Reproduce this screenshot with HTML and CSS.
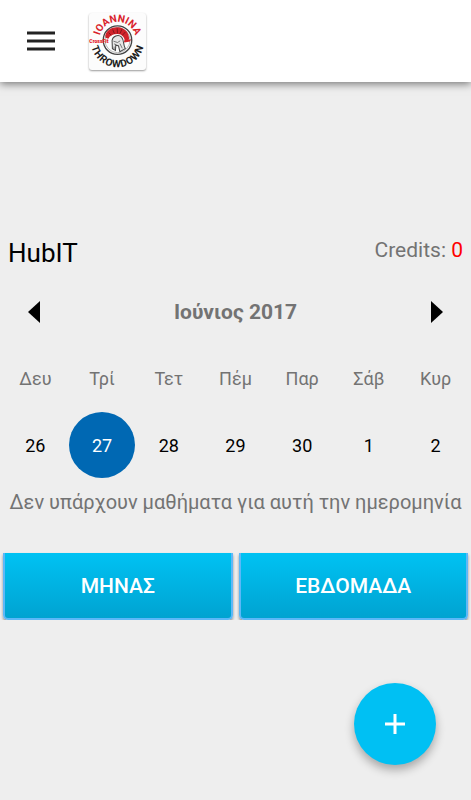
FILE: index.html
```
<!DOCTYPE html>
<html lang="el">
<head>
    <meta charset="UTF-8">
    <meta name="viewport" content="width=device-width, initial-scale=1.0">
    <title>Ioannina Throwdown</title>
    <link rel="stylesheet" href="styles.css">
</head>
<body>
    <header class="toolbar">
        <button class="menu" type="button" aria-label="Μενού">
            <svg width="28" height="20" viewBox="0 0 28 20">
                <path d="M0 2h28M0 10h28M0 18h28" stroke="#222" stroke-width="3"/>
            </svg>
        </button>
        <svg class="logo" viewBox="0 0 168 168" role="img" aria-label="Ioannina Throwdown">
            <defs>
                <path id="top" d="M30 80A54 54 0 0 1 138 80"/>
                <path id="bottom" d="M5 81A79 79 0 0 0 163 81"/>
            </defs>
            <text class="logo-top"><textPath href="#top" startOffset="50%">IOANNINA</textPath></text>
            <text class="logo-bottom" dx="0 2 2 2 2 2 2 2 2"><textPath href="#bottom" startOffset="50%">THROWDOWN</textPath></text>
            <circle cx="84" cy="80" r="42" fill="none" stroke="#444" stroke-width="4"/>
            <circle cx="84" cy="80" r="37" fill="none" stroke="#999" stroke-width="2"/>
            <!-- crest -->
            <path d="M48 66C52 48 72 38 92 43C109 48 119 60 118 78L106 84C105 72 97 62 84 62C70 62 61 67 57 76L49 73Z" fill="#d0222a"/>
            <path d="M58 58l8 8M70 49l5 12M83 45l1 15M97 48l-6 13M107 56l-9 10" stroke="#5c1114" stroke-width="2"/>
            <!-- helmet -->
            <path d="M68 81C70 68 86 62 96 71C104 80 100 94 107 105L91 114L87 97L79 94L78 110L69 105Z" fill="#e6e6e6" stroke="#444" stroke-width="3"/>
            <path d="M72 83l12 4 8-5M74 91l5 2M91 90l7 14M74 99v8" stroke="#444" stroke-width="2" fill="none"/>
            <path d="M103 81l21-4-3 7-17 3z" fill="#d0222a"/>
            <text class="logo-brand" x="1" y="88">CrossFit</text>
        </svg>
    </header>
    <main>
        <div class="account">
            <h1>HubIT</h1>
            <p>Credits: <span class="credits">0</span></p>
        </div>
        <div class="month">
            <button type="button" aria-label="Προηγούμενος">
                <svg width="12" height="22" viewBox="0 0 12 22"><path d="M12 0v22L0 11z"/></svg>
            </button>
            <h2>Ιούνιος 2017</h2>
            <button type="button" aria-label="Επόμενος">
                <svg width="12" height="22" viewBox="0 0 12 22"><path d="M0 0v22l12-11z"/></svg>
            </button>
        </div>
        <table class="week">
            <thead>
                <tr>
                    <th>Δευ</th>
                    <th>Τρί</th>
                    <th>Τετ</th>
                    <th>Πέμ</th>
                    <th>Παρ</th>
                    <th>Σάβ</th>
                    <th>Κυρ</th>
                </tr>
            </thead>
            <tbody>
                <tr>
                    <td><button type="button">26</button></td>
                    <td><button type="button" class="selected">27</button></td>
                    <td><button type="button">28</button></td>
                    <td><button type="button">29</button></td>
                    <td><button type="button">30</button></td>
                    <td><button type="button">1</button></td>
                    <td><button type="button">2</button></td>
                </tr>
            </tbody>
        </table>
        <p class="message">Δεν υπάρχουν μαθήματα για αυτή την ημερομηνία</p>
        <div class="views">
            <button type="button">ΜΗΝΑΣ</button>
            <button type="button">ΕΒΔΟΜΑΔΑ</button>
        </div>
    </main>
    <button class="add" type="button" aria-label="Προσθήκη">
        <svg width="20" height="20" viewBox="0 0 20 20">
            <path d="M10 0v20M0 10h20" stroke="#fff" stroke-width="3"/>
        </svg>
    </button>
</body>
</html>
```
FILE: styles.css
```
* {
    box-sizing: border-box;
}
body {
    margin: 0;
    background-color: #eee;
    color: #737373;
    font-family: Roboto, "Noto Sans", sans-serif;
}
h1, h2, p {
    margin: 0;
}
button {
    border: 0;
    padding: 0;
    background: none;
    font-family: inherit;
    cursor: pointer;
}
svg {
    display: block;
}
.toolbar {
    display: flex;
    align-items: center;
    gap: 28px;
    height: 82px;
    padding: 0 21px;
    background-color: #fff;
    box-shadow: 0 2px 8px rgba(0, 0, 0, 0.5);
}
.menu {
    padding: 6px;
}
.logo {
    width: 57px;
    height: 57px;
    border-radius: 3px;
    background-color: #fcfcfc;
    box-shadow: 0 1px 2px rgba(0, 0, 0, 0.4);
}
.logo-top, .logo-bottom {
    font-size: 30px;
    font-weight: bold;
    text-anchor: middle;
}
.logo-top {
    fill: #d9222a;
}
.logo-bottom {
    fill: #1c1c1c;
}
.logo-brand {
    font-size: 15px;
    font-weight: 900;
    fill: #e3141c;
}
main {
    padding-top: 152px;
}
.account {
    display: flex;
    justify-content: space-between;
    padding: 0 8px;
}
.account h1 {
    padding-top: 3px;
    color: #000;
    font-size: 26px;
    font-weight: normal;
    line-height: 32px;
}
.account p {
    font-size: 21px;
    line-height: 32px;
}
.credits {
    color: #f00;
}
.month {
    display: flex;
    align-items: center;
    justify-content: space-between;
    height: 60px;
    margin-top: 13px;
    padding: 0 20px;
}
.month button {
    padding: 8px;
}
.month h2 {
    font-size: 21px;
    line-height: 24px;
}
.week {
    width: 100%;
    margin-top: 8px;
    padding: 0 2px;
    border-spacing: 0;
    table-layout: fixed;
}
.week th {
    height: 62px;
    padding: 0 0 6px;
    font-size: 18px;
    font-weight: normal;
}
.week td {
    padding: 0;
}
.week button {
    display: block;
    width: 66px;
    height: 66px;
    margin: 0 auto;
    border-radius: 50%;
    color: #000;
    font-size: 18px;
}
.week .selected {
    background-color: #0068b3;
    color: #fff;
}
.message {
    margin-top: 8px;
    font-size: 20px;
    line-height: 32px;
    text-align: center;
}
.views {
    display: flex;
    gap: 6px;
    margin-top: 35px;
    padding: 0 3px;
}
.views button {
    flex: 1;
    height: 67px;
    border: 2px solid #5cb8f8;
    border-top: 0;
    border-radius: 0 0 5px 5px;
    background: linear-gradient(#00c2f3, #00a3d1);
    box-shadow: 0 2px 3px rgba(0, 0, 0, 0.4);
    color: #fff;
    font-size: 21px;
    font-weight: 500;
}
.add {
    position: fixed;
    right: 35px;
    bottom: 35px;
    display: flex;
    align-items: center;
    justify-content: center;
    width: 82px;
    height: 82px;
    border-radius: 50%;
    background-color: #00c0f3;
    box-shadow: 0 5px 10px rgba(0, 0, 0, 0.3);
}
```
